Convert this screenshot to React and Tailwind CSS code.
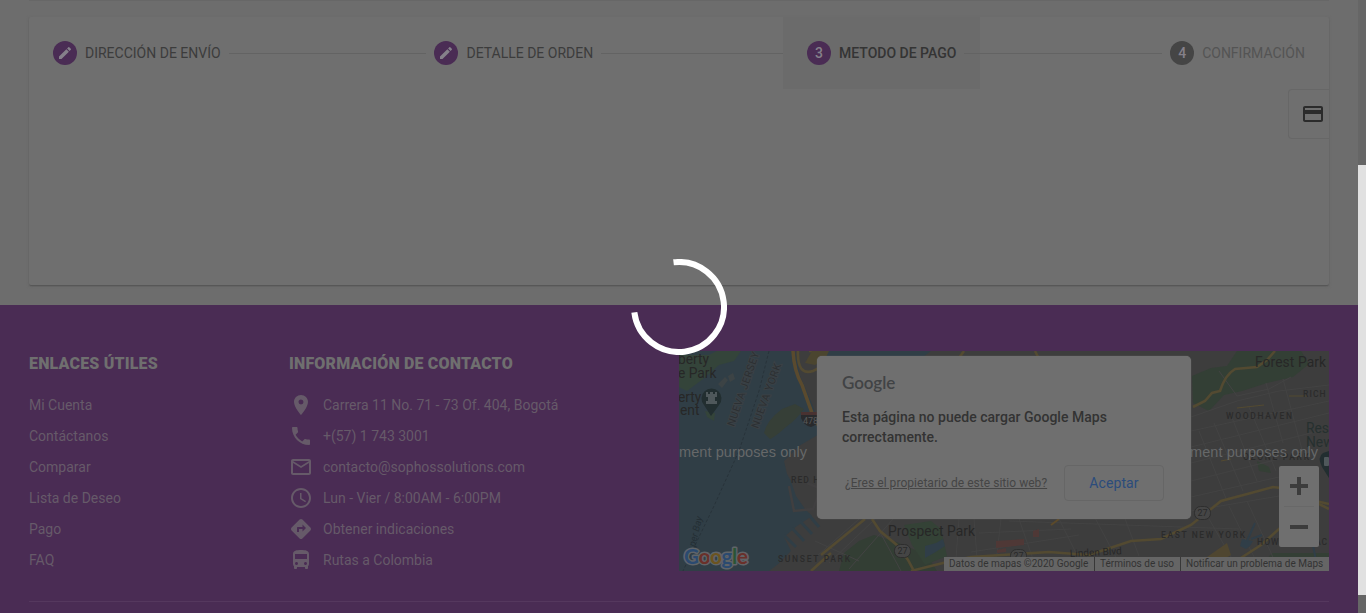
import React from "react";
import {
  MdCreate,
  MdCreditCard,
  MdPlace,
  MdPhone,
  MdMailOutline,
  MdSchedule,
  MdDirections,
  MdDirectionsBus,
} from "react-icons/md";

const links = ["Mi Cuenta", "Contáctanos", "Comparar", "Lista de Deseo", "Pago", "FAQ"];

const contact = [
  [MdPlace, "Carrera 11 No. 71 - 73 Of. 404, Bogotá"],
  [MdPhone, "+(57) 1 743 3001"],
  [MdMailOutline, "contacto@sophossolutions.com"],
  [MdSchedule, "Lun - Vier / 8:00AM - 6:00PM"],
  [MdDirections, "Obtener indicaciones"],
  [MdDirectionsBus, "Rutas a Colombia"],
];

function Step({ badge, label, active, pending }) {
  return (
    <div className={`flex h-[72px] items-center px-6 ${active ? "bg-[#6b6b6b]" : ""}`}>
      <div
        className={`mr-2 flex size-6 shrink-0 items-center justify-center rounded-full text-sm font-medium text-[#85808a] ${
          pending ? "bg-[#454545]" : "bg-[#4a2c54]"
        }`}
      >
        {badge}
      </div>
      <span
        className={`whitespace-nowrap text-sm ${
          active ? "font-medium text-[#343434]" : pending ? "text-[#545454]" : "text-[#3c3c3c]"
        }`}
      >
        {label}
      </span>
    </div>
  );
}

function Line() {
  return <div className="-mx-4 mt-px h-px flex-1 bg-[#636363]" />;
}

function Shield({ x, y }) {
  return (
    <g>
      <rect x={x - 8} y={y - 6.5} width="16" height="13" rx="6" fill="#454545" stroke="#2e2e2e" />
      <text x={x} y={y + 3} fontSize="9" textAnchor="middle" fill="#292929">27</text>
    </g>
  );
}

function MapCanvas() {
  return (
    <svg width="650" height="220" viewBox="0 0 650 220" className="block" fontFamily="Roboto, sans-serif">
      <rect width="650" height="220" fill="#3d3d3d" />
      {/* Water */}
      <path d="M0 0H116L121 25L134 55L142 82L120 95L105 110L108 123L112 130L117 145L126 158L133 165L118 175L105 186L112 200L98 214L90 220H0Z" fill="#303e46" />
      <path d="M136 0H252L240 9L170 12L138 8Z" fill="#303e46" />
      {/* Green areas */}
      <path d="M0 4H30L38 0H62L55 10L40 14L24 28L8 40L0 36Z" fill="#34443a" />
      <path d="M26 60L36 62L35 70L28 66Z" fill="#34443a" />
      <path d="M85 82Q88 69 103 58L116 53L125 58Q117 69 107 76Q96 86 91 88Z" fill="#363f37" />
      <path d="M165 202L180 190L195 184L220 192L248 204L258 220H160Z" fill="#333e34" />
      <path d="M225 174L252 170L262 178L268 205L246 214L233 194Z" fill="#344236" />
      <path d="M513 25L532 17L548 15L558 0H622L630 13L614 26L588 32L563 40L545 44L530 60L514 52Z" fill="#333f35" />
      <path d="M593 202H650V220H578Z" fill="#343f35" />
      <path d="M578 110L590 116L592 122L580 120Z" fill="#343f35" />
      {/* Minor streets */}
      <g stroke="#434343" strokeWidth="1" fill="none">
        <path d="M138 205L180 168M150 212L196 168M170 218L214 168M195 170L222 220M280 168L276 220M295 168L299 220M322 168L316 220M340 168L356 214M380 168L402 212M415 165L440 212M445 165L460 205" />
        <path d="M136 190L180 210M300 182L392 178M292 201L400 184M330 170L560 178M512 80L650 50M512 96L650 62M512 112L640 80M512 130L600 108M512 146L600 126M512 160L600 145" />
        <path d="M520 80L548 150M535 72L564 140M552 64L578 130M570 56L597 120M587 32L604 92M604 28L626 110M530 168L552 206M550 155L575 206M568 150L598 215M512 66L558 50L600 40L650 34M540 20L558 45L590 38L612 26" />
        <path d="M110 135L115 160L134 158L142 138L128 132" stroke="#403f40" strokeWidth="2.5" />
      </g>
      {/* Pier fingers */}
      <g stroke="#303e46" strokeWidth="3">
        <path d="M105 184L117 196M113 177L125 190M121 170L133 183M129 163L140 176" />
      </g>
      {/* Highways */}
      <g fill="none" stroke="#534a31" strokeWidth="2.6">
        <path d="M114 0Q115 20 123 34L133 62L145 85" stroke="#5a4a2e" strokeWidth="3.5" />
        <path d="M119 0Q118 25 134 20L150 12Q146 0 130 0" />
        <path d="M142 204L186 168M132 220L152 202" />
        <path d="M193 168L201 180L219 195L229 209L235 220M285 0L280 7M356 0L360 8" />
        <path d="M232 220L264 212L292 206L370 201L410 204L452 190L482 188L512 174L542 150L572 142L594 136L610 138L650 158" />
        <path d="M514 56L526 50L533 42L541 40Q546 24 556 18L578 16L588 9L596 0" />
        <path d="M554 212L582 194L600 178L614 168M650 153L624 147" />
        <path d="M558 57L585 54M610 45L628 45M542 110L552 108" strokeWidth="1.2" />
      </g>
      <path d="M133 0H150L146 8L136 14L126 12Z" fill="#4b452f" />
      <path d="M528 206L548 192L552 204L542 210Z" fill="#4f4630" />
      <path d="M372 174L380 168" stroke="#5c4a2a" strokeWidth="2" />
      <path d="M317 190L345 188V194L317 197ZM318 199L327 197V201L318 202ZM354 180L360 178V186L354 186Z" fill="#4f3836" />
      <path d="M246 195L257 192L264 188L266 195L255 202L246 207ZM563 188L574 190L580 180L571 195L567 198L561 195Z" fill="#303e48" />
      <path d="M568 190L576 172M572 188L583 184M634 194L637 210M622 158L624 168" stroke="#303e48" strokeWidth="2" />
      <path d="M90 0L80 40L60 100L35 155L20 186L4 220" stroke="#28333a" strokeDasharray="3 2" fill="none" />
      {/* Place labels */}
      <g fill="#272727" fontSize="13">
        <text x="-1" y="13" fontSize="13.8">berty</text>
        <text x="-1" y="27" fontSize="13.8">e Park</text>
        <text x="-1" y="51" fontSize="13.8">erty</text>
        <text x="1" y="64" fontSize="13.8">ent</text>
        <text x="576" y="16" fontSize="13.8" textLength="71">Forest Park</text>
        <text x="209" y="185" fontSize="13.8" textLength="87">Prospect Park</text>
        <text x="627" y="82" fill="#26302f" fontSize="13.8">Res</text>
        <text x="627" y="96" fill="#26302f" fontSize="13.8">New</text>
        <text x="391" y="206" fontSize="10" textLength="52" transform="rotate(-3 391 206)">Linden Blvd</text>
      </g>
      <g fill="#2b2b2b" fontSize="8.5" fontWeight="500">
        <text x="112" y="132" letterSpacing="1.1">RED HOOK</text>
        <text x="99" y="211" textLength="72">SUNSET PARK</text>
        <text x="547" y="68" textLength="66">WOODHAVEN</text>
        <text x="624" y="46" letterSpacing="1.1">RICH</text>
        <text x="564" y="109" textLength="66">OZONE PARK</text>
        <text x="482" y="187" textLength="84">EAST NEW YORK</text>
        <text x="578" y="194" letterSpacing="1.1">HOWARD BEAC</text>
      </g>
      <g fill="#2c3033" stroke="#3b4145" strokeWidth="2" paintOrder="stroke" fontSize="10.5">
        <text x="55" y="76" textLength="78" transform="rotate(-71 55 76)">NUEVA JERSEY</text>
        <text x="79" y="78" textLength="68" transform="rotate(-70 79 78)">NUEVA YORK</text>
      </g>
      <text x="16" y="196" fontSize="9.5" fontStyle="italic" fill="#242e34" transform="rotate(-76 16 196)">per Bay</text>
      <path d="M39 33L46 26L49 29L43 37ZM49 25L54 22L56 28L51 31Z" fill="#3c4345" />
      {/* Landmark pins */}
      <path d="M32 65L25 54A10 10 0 1 1 40 54Z" fill="#222e30" />
      <path d="M27 41h2v2h2v-2h3v2h2v-2h2v5h-2v4h2v3H27v-3h2v-4h-2Z" fill="#4f585b" />
      <path d="M650 127L643 116Q638 106 644 102L650 100Z" fill="#222e30" />
      <rect x="645" y="106" width="5" height="9" rx="1" fill="#4f585b" />
      {/* Interstate shield */}
      <path d="M122 61h19v8q-3 5-9 7q-7-1-10-9Z" fill="#292a2c" />
      <path d="M122 61h19v3h-19Z" fill="#493231" />
      <text x="124" y="73" fontSize="9" fill="#585858">478</text>
      <Shield x={223.5} y={200} />
      <Shield x={339.5} y={205} />
      <Shield x={523.5} y={162} />
      {/* Watermark */}
      <g fill="#666869" fontFamily="Liberation Sans, Arial, sans-serif" fontSize="14.5">
        <text x="0" y="106" textLength="128">ment purposes only</text>
        <text x="511" y="106" textLength="128">ment purposes only</text>
      </g>
      <text x="5" y="213" fontFamily="Lato, sans-serif" fontWeight="700" fontSize="21" textLength="64" stroke="#606468" strokeWidth="3" strokeLinejoin="round" paintOrder="stroke">
        <tspan fill="#2b4a70">G</tspan>
        <tspan fill="#6a302a">o</tspan>
        <tspan fill="#6c5420">o</tspan>
        <tspan fill="#2b4a70">g</tspan>
        <tspan fill="#2a5435">l</tspan>
        <tspan fill="#6a302a">e</tspan>
      </text>
    </svg>
  );
}

function MapPanel() {
  return (
    <div className="relative h-[220px] w-[650px] overflow-hidden">
      <MapCanvas />
      <div className="absolute left-[138px] top-[5px] h-[163px] w-[374px] rounded-[5px] bg-[#6f6f6f] px-[25px] pt-[14px] shadow-[0_0_1px_#777]">
        <div className="h-[37px] font-['Lato',sans-serif] text-[17px] leading-[26px] font-semibold tracking-[-0.1px] text-[#414345]">
          Google
        </div>
        <p className="text-sm leading-5 font-medium tracking-[0.02px] text-[#333333]">
          Esta página no puede cargar Google Maps correctamente.
        </p>
        <div className="mt-[18px] flex items-center justify-between pl-[3px] pr-0.5">
          <span className="whitespace-nowrap text-xs tracking-[0.04px] text-[#454545] underline">
            ¿Eres el propietario de este sitio web?
          </span>
          <div className="flex h-9 w-[100px] items-center justify-center rounded border border-[#666666] text-sm tracking-[0.1px] text-[#2b4c7c]">
            Aceptar
          </div>
        </div>
      </div>
      <div className="absolute left-[600px] top-[115px] flex h-[81px] w-10 flex-col items-center rounded-[2px] bg-[#6f6f6f]">
        <svg width="40" height="81" viewBox="0 0 40 81">
          <path d="M18 11h4v7h7v4h-7v7h-4v-7h-7v-4h7ZM11 59h18v4H11Z" fill="#3c3c3c" />
          <path d="M5 40.5h30" stroke="#686868" />
        </svg>
      </div>
      <div className="absolute bottom-0 right-0 flex h-[14px] items-center bg-[#656565] text-[10px] leading-[14px] text-[#333333]">
        <span className="w-[150px] whitespace-nowrap pl-[5px]">Datos de mapas ©2020 Google</span>
        <span className="w-[86px] whitespace-nowrap border-l border-[#383838] pl-[5px]">Términos de uso</span>
        <span className="w-[149px] whitespace-nowrap border-l border-[#383838] pl-[5px]">Notificar un problema de Maps</span>
      </div>
    </div>
  );
}

export default function App() {
  return (
    <div className="relative flex h-[613px] w-[1366px] overflow-hidden bg-[#6d6d6d] font-['Roboto',sans-serif]">
      <main className="flex w-[1358px] flex-col">
        <div className="mx-[29px] mb-4 h-px shrink-0 bg-[#676767]" />
        <section className="mx-[29px] h-[268px] shrink-0 rounded-[2px] bg-[#6f6f6f] shadow-[0_2px_1px_-1px_#575757,0_1px_1px_0_#5f5f5f,0_1px_3px_0_#646464]">
          <div className="flex items-center">
            <Step badge={<MdCreate size={16} />} label="DIRECCIÓN DE ENVÍO" />
            <Line />
            <Step badge={<MdCreate size={16} />} label="DETALLE DE ORDEN" />
            <Line />
            <Step badge="3" label="METODO DE PAGO" active />
            <Line />
            <Step badge="4" label="CONFIRMACIÓN" pending />
          </div>
          <div className="flex justify-end overflow-hidden">
            <div className="flex h-[50px] w-[41px] shrink-0 items-center overflow-hidden rounded-l border border-r-0 border-[#676767] pl-3 text-[#2b2b2b]">
              <MdCreditCard size={24} className="shrink-0" />
            </div>
          </div>
        </section>
        <footer className="mt-5 flex-1 bg-[#4a2c54] px-[29px] pt-[46px]">
          <div className="flex h-[250px] text-sm text-[#665a69]">
            <div className="w-[260px]">
              <h2 className="mb-[13px] pt-px text-base font-black tracking-[0.18px] text-[#6f6f6f]">ENLACES ÚTILES</h2>
              {links.map((text) => (
                <div key={text} className="flex h-[31px] items-center">{text}</div>
              ))}
            </div>
            <div className="w-[390px]">
              <h2 className="mb-[13px] pt-px text-base font-black tracking-[0.18px] text-[#6f6f6f]">INFORMACIÓN DE CONTACTO</h2>
              {contact.map(([Icon, text]) => (
                <div key={text} className="flex h-[31px] items-center">
                  <Icon size={24} className="mr-2.5" />
                  {text}
                </div>
              ))}
            </div>
            <MapPanel />
          </div>
          <div className="h-px bg-[#55385e]" />
        </footer>
      </main>
      <aside className="flex w-2 flex-col bg-[#666666] pt-[165px]">
        <div className="h-[430px] bg-[#e1e1e1]" />
      </aside>
      <svg className="absolute left-[631px] top-[259px]" width="96" height="96" viewBox="0 0 96 96">
        <circle cx="48" cy="48" r="45" fill="none" stroke="#fff" strokeWidth="6" pathLength="100" strokeDasharray="75 25" transform="rotate(-97 48 48)" />
      </svg>
    </div>
  );
}
